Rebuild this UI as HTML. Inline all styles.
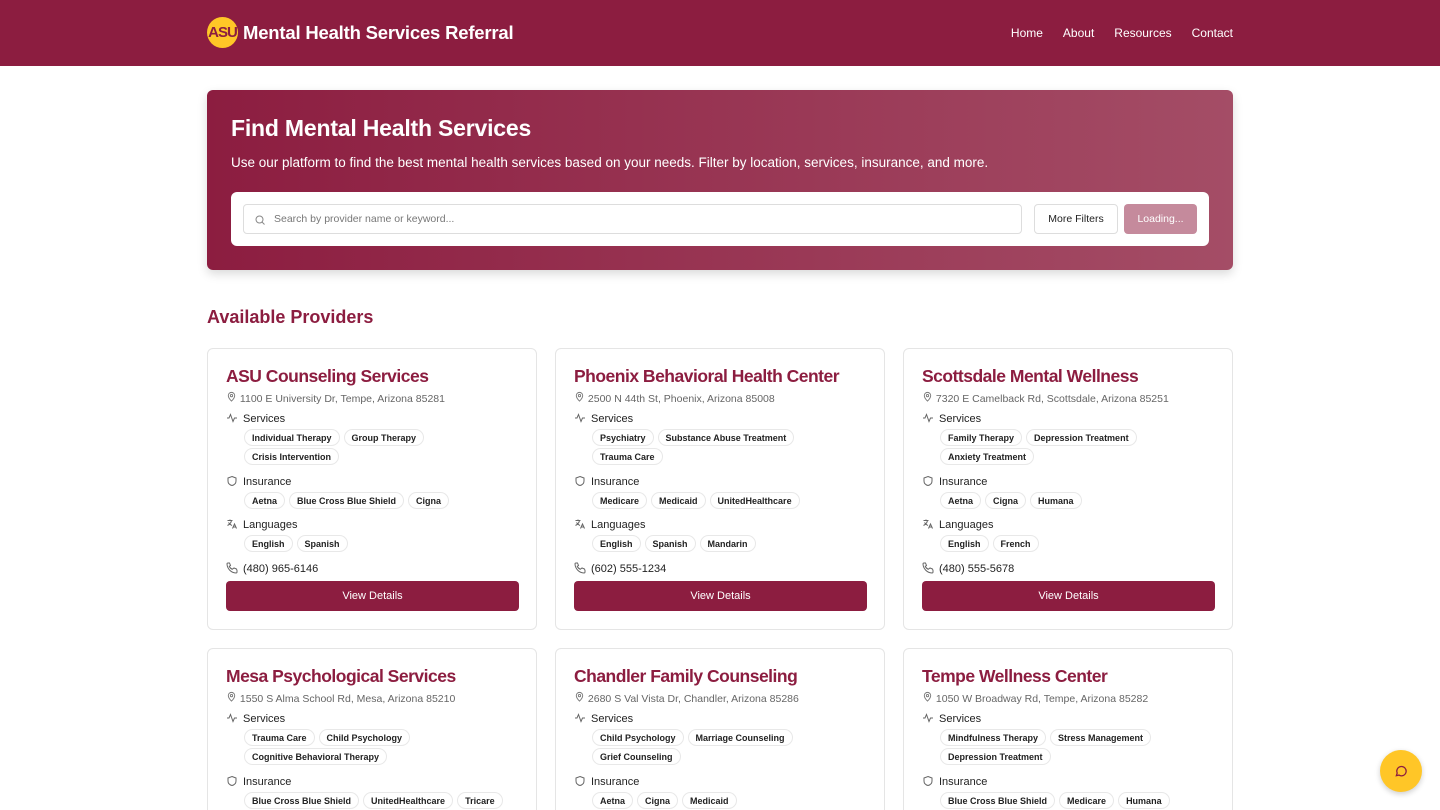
<!DOCTYPE html>
<html style="height:810px;overflow:hidden"><head><meta charset="utf-8"><style>
*{box-sizing:border-box;margin:0;padding:0}
body{width:1440px;height:810px;overflow:hidden;background:#fff;font-family:"Liberation Sans",sans-serif;color:#222;position:relative}
.hdr{height:66px;background:#8c1d40;position:relative}
.logo{position:absolute;left:207px;top:17px;width:31px;height:31px;border-radius:50%;background:#ffc627;color:#8c1d40;font-weight:bold;font-size:15px;line-height:31px;text-align:center;letter-spacing:-1px}
.ttl{position:absolute;left:243px;top:22px;color:#fff;font-weight:bold;font-size:18.5px;letter-spacing:-.2px}
.nav{position:absolute;right:207px;top:26px;color:#fff;font-size:12px}
.nav span{margin-left:20px}
.hero{position:absolute;left:207px;top:90px;width:1026px;height:180px;border-radius:6px;background:linear-gradient(90deg,#8c1d40 0%,#a44d66 100%);box-shadow:0 4px 10px rgba(0,0,0,.15)}
.hero h1{position:absolute;left:24px;top:25px;color:#fff;font-size:23px;letter-spacing:-.2px}
.hero p{position:absolute;left:24px;top:65px;color:#fff;font-size:13.5px}
.sb{position:absolute;left:24px;top:102px;width:978px;height:54px;background:#fff;border-radius:6px}
.inp{position:absolute;left:12px;top:12px;width:779px;height:30px;border:1px solid #ddd;border-radius:4px;font-size:10.5px;color:#777;padding:8px 0 0 30px}
.inp svg{position:absolute;left:10px;top:9px}
.mf{position:absolute;left:803px;top:12px;width:84px;height:30px;border:1px solid #ddd;border-radius:4px;font-size:10.5px;text-align:center;line-height:28px}
.ld{position:absolute;left:893px;top:12px;width:73px;height:30px;background:#c58a9c;border-radius:4px;font-size:10.5px;text-align:center;line-height:30px;color:#fff}
h2{position:absolute;left:207px;top:307px;color:#8c1d40;font-size:18px}
.card{position:absolute;width:330px;height:282px;border:1px solid #e5e5e5;border-radius:6px;padding:0 18px}
.card h3{position:absolute;left:18px;top:17px;color:#8c1d40;font-size:17.5px;letter-spacing:-.5px}
.ad{position:absolute;left:18px;top:42px;font-size:10.5px;color:#666}
.lb{position:absolute;left:18px;font-size:11px;color:#222}
.lb svg{vertical-align:-2px;margin-right:5px}
.tags{position:absolute;left:36px;width:280px;font-size:0}
.t{display:inline-block;font-size:9px;font-weight:bold;border:1px solid #e8e8e8;border-radius:9px;padding:3px 7px;margin:0 4px 2px 0;height:17px;line-height:10px}
.btn{position:absolute;left:18px;top:232px;width:293px;height:30px;background:#8c1d40;color:#fff;border-radius:4px;font-size:11px;text-align:center;line-height:30px}
.chat{position:absolute;left:1380px;top:750px;width:42px;height:42px;border-radius:50%;background:#ffc627;box-shadow:0 2px 6px rgba(0,0,0,.2)}
</style></head><body>
<div class="hdr"><div class="logo">ASU</div><div class="ttl">Mental Health Services Referral</div>
<div class="nav"><span>Home</span><span>About</span><span>Resources</span><span>Contact</span></div></div>
<div class="hero"><h1>Find Mental Health Services</h1>
<p>Use our platform to find the best mental health services based on your needs. Filter by location, services, insurance, and more.</p>
<div class="sb"><div class="inp"><svg width="12" height="12" viewBox="0 0 24 24" fill="none" stroke="#888" stroke-width="2"><circle cx="11" cy="11" r="7"/><path d="M21 21l-5-5"/></svg>Search by provider name or keyword...</div>
<div class="mf">More Filters</div><div class="ld">Loading...</div></div></div>
<h2>Available Providers</h2>
<div id="cards"></div>
<div class="chat"><svg style="position:absolute;left:14px;top:14px" width="14" height="14" viewBox="0 0 24 24" fill="none" stroke="#8c1d40" stroke-width="2.2"><path d="M4 20l1.5-4.5A8 8 0 1 1 8.5 19z"/></svg></div>
<script>
const pin='<svg width="11" height="11" viewBox="0 0 24 24" fill="none" stroke="#777" stroke-width="2"><path d="M12 22s7-7 7-12a7 7 0 0 0-14 0c0 5 7 12 7 12z"/><circle cx="12" cy="10" r="2.5"/></svg>';
const act='<svg width="12" height="12" viewBox="0 0 24 24" fill="none" stroke="#666" stroke-width="2"><path d="M2 12h4l3-7 5 14 3-7h5"/></svg>';
const sh='<svg width="12" height="12" viewBox="0 0 24 24" fill="none" stroke="#666" stroke-width="2"><path d="M12 3l8 3v6c0 5-4 8-8 9-4-1-8-4-8-9V6z"/></svg>';
const lg='<svg width="12" height="12" viewBox="0 0 24 24" fill="none" stroke="#666" stroke-width="2"><path d="M3 5h10M8 3v2M5 9c2 4 5 5 7 6M11 5c-1 5-4 8-8 10M13 21l4-9 4 9M14.5 18h5"/></svg>';
const ph='<svg width="12" height="12" viewBox="0 0 24 24" fill="none" stroke="#666" stroke-width="2"><path d="M22 17v3a2 2 0 0 1-2 2A19 19 0 0 1 2 4a2 2 0 0 1 2-2h3l2 5-2.5 1.5a11 11 0 0 0 6 6L16 12l5 2z"/></svg>';
const D=[
["ASU Counseling Services","1100 E University Dr, Tempe, Arizona 85281",["Individual Therapy","Group Therapy","Crisis Intervention"],["Aetna","Blue Cross Blue Shield","Cigna"],["English","Spanish"],"(480) 965-6146"],
["Phoenix Behavioral Health Center","2500 N 44th St, Phoenix, Arizona 85008",["Psychiatry","Substance Abuse Treatment","Trauma Care"],["Medicare","Medicaid","UnitedHealthcare"],["English","Spanish","Mandarin"],"(602) 555-1234"],
["Scottsdale Mental Wellness","7320 E Camelback Rd, Scottsdale, Arizona 85251",["Family Therapy","Depression Treatment","Anxiety Treatment"],["Aetna","Cigna","Humana"],["English","French"],"(480) 555-5678"],
["Mesa Psychological Services","1550 S Alma School Rd, Mesa, Arizona 85210",["Trauma Care","Child Psychology","Cognitive Behavioral Therapy"],["Blue Cross Blue Shield","UnitedHealthcare","Tricare"],["English"],""],
["Chandler Family Counseling","2680 S Val Vista Dr, Chandler, Arizona 85286",["Child Psychology","Marriage Counseling","Grief Counseling"],["Aetna","Cigna","Medicaid"],["English"],""],
["Tempe Wellness Center","1050 W Broadway Rd, Tempe, Arizona 85282",["Mindfulness Therapy","Stress Management","Depression Treatment"],["Blue Cross Blue Shield","Medicare","Humana"],["English"],""]];
let h='';D.forEach((d,i)=>{const x=207+(i%3)*348,y=348+Math.floor(i/3)*300;
const tg=a=>a.map(s=>'<span class="t">'+s+'</span>').join('');
h+=`<div class="card" style="left:${x}px;top:${y}px"><h3>${d[0]}</h3><div class="ad">${pin} ${d[1]}</div>
<div class="lb" style="top:63px">${act}Services</div><div class="tags" style="top:80px">${tg(d[2])}</div>
<div class="lb" style="top:126px">${sh}Insurance</div><div class="tags" style="top:143px">${tg(d[3])}</div>
<div class="lb" style="top:169px">${lg}Languages</div><div class="tags" style="top:186px">${tg(d[4])}</div>
<div class="lb" style="top:213px">${ph}${d[5]}</div><div class="btn">View Details</div></div>`;});
document.getElementById('cards').innerHTML=h;
</script>
</body></html>
